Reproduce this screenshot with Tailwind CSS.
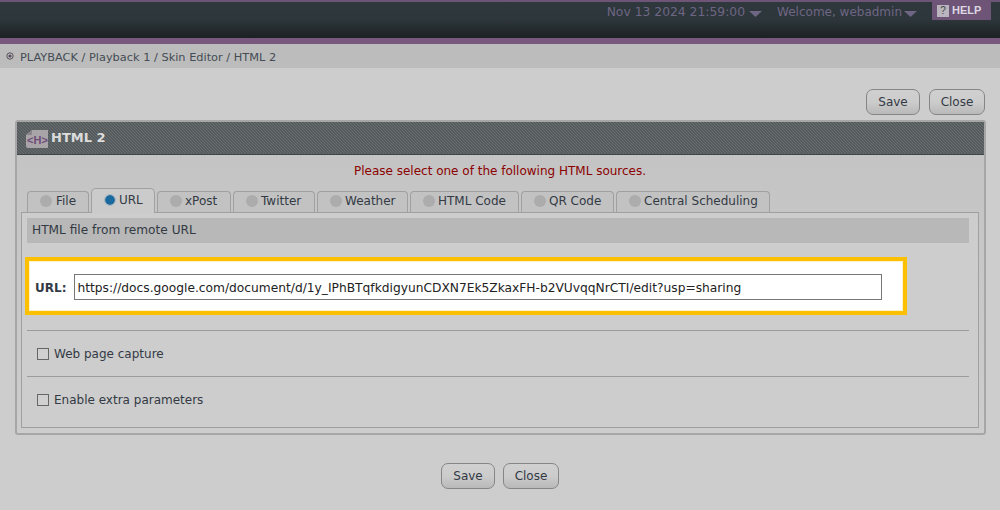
<!DOCTYPE html>
<html>
<head>
<meta charset="utf-8">
<script src="https://cdn.jsdelivr.net/npm/@tailwindcss/browser@4"></script>
</head>
<body class="m-0 w-[1000px] h-[510px] overflow-hidden bg-[#cdcdcd] font-['DejaVu_Sans',Verdana,sans-serif] text-[12px] text-[#333a44]">
<header class="h-[38px] bg-gradient-to-b from-[#2f383d] via-[#2d363b] to-[#1c2023] flex justify-end items-start border-t-2 border-t-[#6e5578]">
  <div class="flex items-start text-[#6e6684] leading-[20px] mr-[9px]">
    <span class="flex items-center mr-[15px] text-[12.350px]">Nov 13 2024 21:59:00<svg class="ml-[4px] mt-[3px]" width="13" height="6" viewBox="0 0 13 6"><path d="M0 0H13L6.500 6Z" fill="#6e6684"/></svg></span>
    <span class="flex items-center mr-[15px] text-[12px]">Welcome, webadmin<svg class="ml-[2px] mt-[3px]" width="13" height="6" viewBox="0 0 13 6"><path d="M0 0H13L6.500 6Z" fill="#6e6684"/></svg></span>
    <span class="w-[59px] h-[18px] bg-[#6e5578] flex items-start pt-[1px] pl-[5px] text-[#dcd6e2] text-[11px] leading-[14px] font-['Liberation_Sans',sans-serif] font-bold"><span class="w-[12px] h-[12px] mt-[2px] bg-[#b9b4bd] text-[#444] font-normal flex items-center justify-center text-[10px] mr-[3px]">?</span>HELP</span>
  </div>
</header>
<div class="h-[6px] bg-[#78587f]"></div>
<nav class="h-[24px] bg-[#bcbcbc] flex items-center pl-[6px] pt-[3px] text-[11.350px] text-[#444c55]">
  <svg class="mr-[6px] -mt-[3px]" width="8" height="8" viewBox="0 0 8 8"><circle cx="4" cy="4" r="3.200" fill="none" stroke="#555" stroke-width="1"/><circle cx="4" cy="4" r="1.600" fill="#5a4a60"/></svg>
  <span>PLAYBACK / Playback 1 / Skin Editor / HTML 2</span>
</nav>
<div class="flex justify-end gap-[9px] pt-[21px] pr-[15px]">
  <button class="w-[54px] h-[26px] rounded-[7px] border border-[#868686] bg-gradient-to-b from-[#d0d0d0] via-[#cccccc] to-[#b9b9b9] text-[12px] text-[#333a44]">Save</button>
  <button class="w-[56px] h-[26px] rounded-[7px] border border-[#868686] bg-gradient-to-b from-[#d0d0d0] via-[#cccccc] to-[#b9b9b9] text-[12px] text-[#333a44]">Close</button>
</div>
<section class="ml-[15px] mt-[5px] w-[971px] h-[315px] border-2 border-[#a6a6a6] rounded-[3px] bg-gradient-to-b from-[#c3c3c3] to-[#cdcdcd] flex flex-col">
  <div class="h-[33px] shrink-0 flex items-center pl-[9px] border-b border-b-[#3f4548] bg-[#5f6567] bg-[linear-gradient(45deg,#565c5e_25%,#686d6f_25%,#686d6f_50%,#565c5e_50%,#565c5e_75%,#686d6f_75%)] bg-size-[3px_3px] text-[#dcdcdc] font-bold text-[13px]">
    <svg class="mr-[3px] mt-[1px]" width="22" height="18" viewBox="0 0 22 18"><path d="M6 0H22V18H2a2 2 0 0 1-2-2V5Z" fill="#a9a4a8"/><path d="M6 0V5H0Z" fill="#8a868a"/><text x="11.500" y="14" text-anchor="middle" font-size="11" fill="#6d4d78" font-family="Liberation Sans">&lt;H&gt;</text></svg>
    <span>HTML 2</span>
  </div>
  <p class="text-center text-[#8b0000] text-[12px] leading-[15px] mt-[9px] -ml-[1px]">Please select one of the following HTML sources.</p>
  <div class="flex items-end gap-[2px] pl-[10px] mt-[8px] h-[25px] relative z-10 shrink-0">
    <div class="w-[62px] h-[21px] border border-[#a0a0a0] border-b-0 rounded-t-[4px] bg-[#c2c2c2] flex items-center pl-[12px] pb-[2px] gap-[4px]"><span class="w-[12px] h-[12px] rounded-full bg-[#acacac]"></span>File</div>
    <div class="w-[64px] h-[25px] border border-[#a0a0a0] border-b-0 rounded-t-[5px] bg-[#cbcbcb] -mb-[1px] flex items-center pl-[13px] gap-[4px] pb-[3px]"><span class="w-[10px] h-[10px] rounded-full bg-[#1a6aa0] outline outline-1 outline-[#a9b4bd]"></span>URL</div>
    <div class="w-[74px] h-[21px] border border-[#a0a0a0] border-b-0 rounded-t-[4px] bg-[#c2c2c2] flex items-center pl-[12px] pb-[2px] gap-[3px]"><span class="w-[12px] h-[12px] rounded-full bg-[#acacac]"></span>xPost</div>
    <div class="w-[82px] h-[21px] border border-[#a0a0a0] border-b-0 rounded-t-[4px] bg-[#c2c2c2] flex items-center pl-[12px] pb-[2px] gap-[3px]"><span class="w-[12px] h-[12px] rounded-full bg-[#acacac]"></span>Twitter</div>
    <div class="w-[91px] h-[21px] border border-[#a0a0a0] border-b-0 rounded-t-[4px] bg-[#c2c2c2] flex items-center pl-[12px] pb-[2px] gap-[3px]"><span class="w-[12px] h-[12px] rounded-full bg-[#acacac]"></span>Weather</div>
    <div class="w-[109px] h-[21px] border border-[#a0a0a0] border-b-0 rounded-t-[4px] bg-[#c2c2c2] flex items-center pl-[12px] pb-[2px] gap-[3px]"><span class="w-[12px] h-[12px] rounded-full bg-[#acacac]"></span>HTML Code</div>
    <div class="w-[93px] h-[21px] border border-[#a0a0a0] border-b-0 rounded-t-[4px] bg-[#c2c2c2] flex items-center pl-[12px] pb-[2px] gap-[3px]"><span class="w-[12px] h-[12px] rounded-full bg-[#acacac]"></span>QR Code</div>
    <div class="w-[154px] h-[21px] border border-[#a0a0a0] border-b-0 rounded-t-[4px] bg-[#c2c2c2] flex items-center pl-[12px] pb-[2px] gap-[3px]"><span class="w-[12px] h-[12px] rounded-full bg-[#acacac]"></span>Central Scheduling</div>
  </div>
  <div class="ml-[4px] mr-[5px] h-[216px] border border-[#a0a0a0] bg-[#cdcdcd] pt-[5px] px-[5px]">
    <div class="h-[25px] w-[942px] bg-[#b8b8b8] flex items-center pl-[5px] pb-[1px] text-[12.150px]">HTML file from remote URL</div>
    <div class="-ml-[2px] mt-[14px] w-[882px] h-[58px] border-4 border-[#fdc000] bg-white flex items-center pl-[6px] pt-[2px] shadow-[inset_0_0_0_1px_#fff3c8]">
      <label class="font-bold text-[#333a44] mr-[8px] pt-[2px]">URL:</label>
      <div class="w-[808px] h-[26px] border border-[#777] bg-white flex items-center pl-[2px] pt-[3px] text-[#222] text-[12.240px]">https://docs.google.com/document/d/1y_IPhBTqfkdigyunCDXN7Ek5ZkaxFH-b2VUvqqNrCTI/edit?usp=sharing</div>
    </div>
    <div class="mt-[15px] w-[942px] border-t border-t-[#9c9c9c] h-[46px] flex items-center pl-[10px] pt-[1px]"><span class="w-[12px] h-[12px] border border-[#666] bg-[#d0d0d0] mr-[5px]"></span>Web page capture</div>
    <div class="w-[942px] border-t border-t-[#9c9c9c] h-[46px] flex items-center pl-[10px] pt-[1px]"><span class="w-[12px] h-[12px] border border-[#666] bg-[#d0d0d0] mr-[5px]"></span>Enable extra parameters</div>
  </div>
</section>
<div class="flex justify-center gap-[8px] mt-[28px]">
  <button class="w-[54px] h-[26px] rounded-[7px] border border-[#868686] bg-gradient-to-b from-[#d0d0d0] via-[#cccccc] to-[#b9b9b9] text-[12px] text-[#333a44]">Save</button>
  <button class="w-[56px] h-[26px] rounded-[7px] border border-[#868686] bg-gradient-to-b from-[#d0d0d0] via-[#cccccc] to-[#b9b9b9] text-[12px] text-[#333a44]">Close</button>
</div>
</body>
</html>
